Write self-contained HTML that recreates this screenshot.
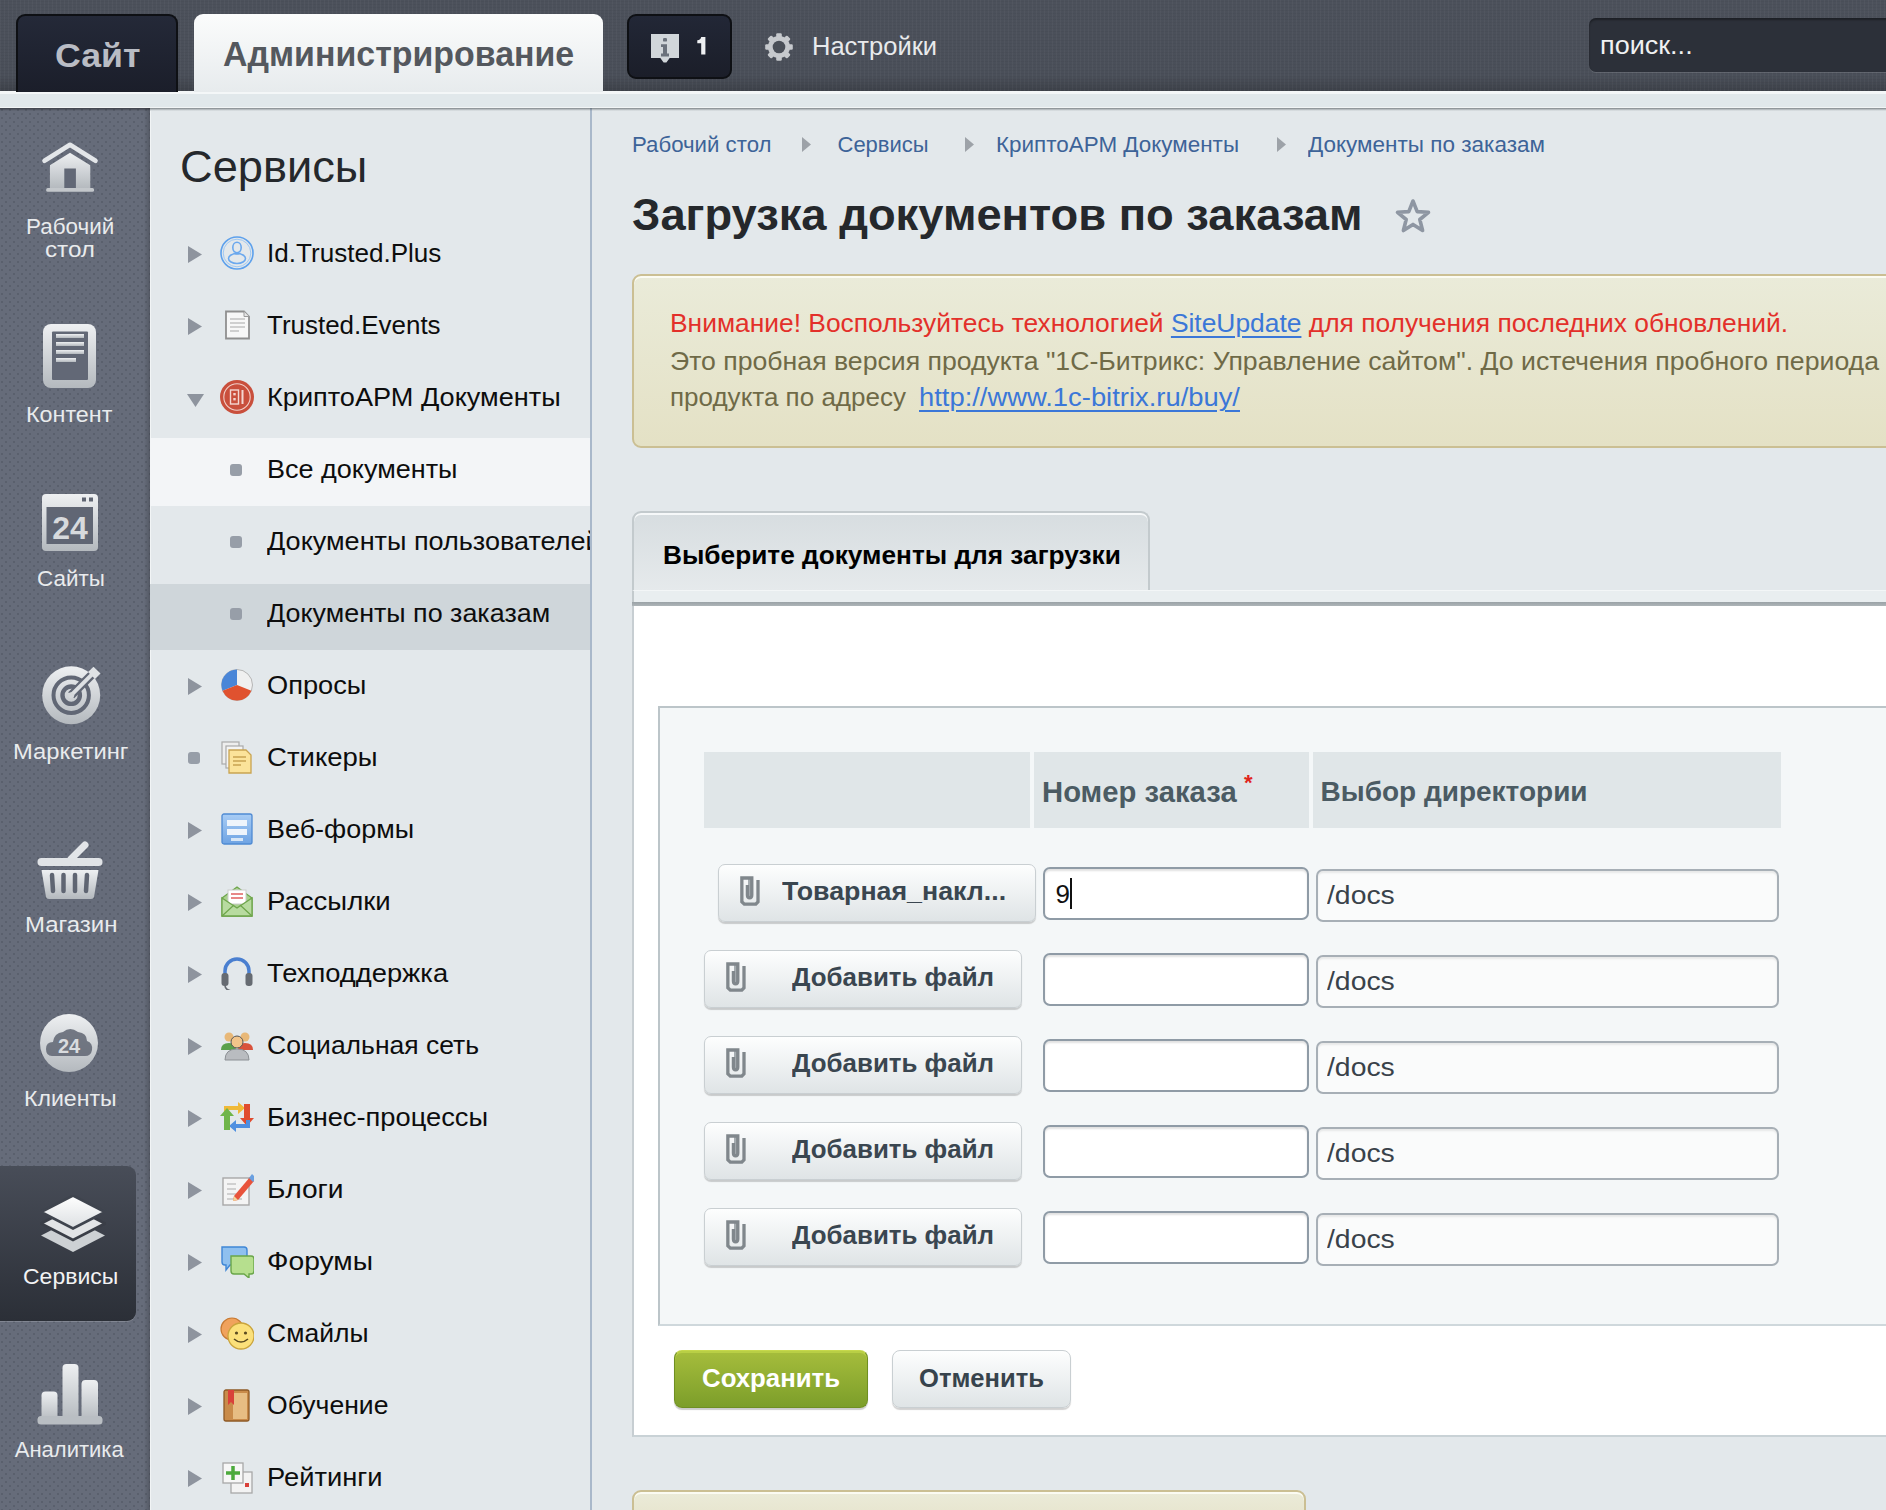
<!DOCTYPE html><html><head><meta charset="utf-8"><style>
html,body{margin:0;padding:0;width:1886px;height:1510px;overflow:hidden;background:#e4e9ec}
.t{position:absolute;white-space:nowrap;line-height:1;font-family:"Liberation Sans",sans-serif}
svg{display:block}
</style></head><body>
<div style="position:absolute;left:0px;top:0px;width:1886px;height:92px;background-image:repeating-linear-gradient(90deg,rgba(255,255,255,.03) 0 1px,transparent 1px 4px),repeating-linear-gradient(0deg,rgba(0,0,0,.035) 0 1px,transparent 1px 3px),linear-gradient(#4c515b,#4a4f59 82%,#3c4048)"></div>
<div style="position:absolute;left:0px;top:91px;width:1886px;height:17px;background:#e1e8eb;border-top:3px solid #f4f7f8;border-bottom:1px solid #f2f5f6;box-sizing:border-box"></div>
<div style="position:absolute;left:0px;top:108px;width:150px;height:1402px;background-color:#666c7a;background-image:radial-gradient(circle at 2px 2px,#5a606d .9px,transparent 1.5px),radial-gradient(circle at 6px 6px,#5a606d .9px,transparent 1.5px);background-size:8px 8px"></div>
<div style="position:absolute;left:144px;top:108px;width:6px;height:1402px;background:linear-gradient(90deg,rgba(0,0,0,0),rgba(0,0,0,.18))"></div>
<div style="position:absolute;left:150px;top:108px;width:440px;height:1402px;background:#e3e8eb"></div>
<div style="position:absolute;left:590px;top:108px;width:2px;height:1402px;background:#a9b8ca"></div>
<div style="position:absolute;left:592px;top:108px;width:1294px;height:1402px;background:#e3e8eb"></div>
<div style="position:absolute;left:150px;top:108px;width:1736px;height:3px;background:linear-gradient(rgba(60,68,72,.6),rgba(60,68,72,.2) 60%,rgba(60,68,72,0))"></div>
<div style="position:absolute;left:150px;top:111px;width:1px;height:1399px;background:#f1f4f5"></div>
<div style="position:absolute;left:0px;top:108px;width:150px;height:3px;background:linear-gradient(rgba(0,0,0,.4),rgba(0,0,0,0))"></div>
<div style="position:absolute;left:16px;top:14px;width:162px;height:78px;background:linear-gradient(#242938,#1b1e2a);border:2px solid #0e1014;border-bottom:none;border-radius:9px 9px 0 0;box-sizing:border-box"></div>
<div class="t " style="left:55px;top:37.71px;font-size:34px;color:#b9bcc4;font-weight:bold;transform:scaleX(1.05);transform-origin:0 0;">Сайт</div>
<div style="position:absolute;left:194px;top:14px;width:409px;height:78px;background:linear-gradient(#fbfcfc,#e7ebed);border-radius:9px 9px 0 0"></div>
<div class="t " style="left:223px;top:36.37px;font-size:35px;color:#54585e;font-weight:bold;transform:scaleX(0.969);transform-origin:0 0;">Администрирование</div>
<div style="position:absolute;left:627px;top:14px;width:105px;height:65px;background:linear-gradient(#222736,#1b1e29);border:2px solid #0e1014;border-radius:9px;box-sizing:border-box"></div>
<svg style="position:absolute;left:650px;top:33px;" width="30" height="31" viewBox="0 0 30 31"><path d="M1 1h28v24h-9.3l-3.3 4.6h-2.8L10.3 25H1z" fill="#d1d6da"/><rect x="13" y="5" width="4" height="3.6" rx="1.2" fill="#6b727c"/><path d="M11 11.3h6v9.3h2v2.8h-8v-2.8h2v-6.5h-2z" fill="#6b727c"/></svg>
<svg style="position:absolute;left:697px;top:37px;" width="9" height="18" viewBox="0 0 9 18"><path d="M4.2 0 H8.4 V17.4 H4.2 V6.2 H0.3 V3.3 Q3.8 3.1 4.2 0z" fill="#eef0f2"/></svg>
<svg style="position:absolute;left:763px;top:31px;" width="32" height="32" viewBox="0 0 32 32"><g fill="#c6c9cd"><circle cx="16" cy="16" r="11"/><rect x="13.2" y="2.2" width="5.6" height="6" rx="1.2" transform="rotate(0 16 16)"/><rect x="13.2" y="2.2" width="5.6" height="6" rx="1.2" transform="rotate(45 16 16)"/><rect x="13.2" y="2.2" width="5.6" height="6" rx="1.2" transform="rotate(90 16 16)"/><rect x="13.2" y="2.2" width="5.6" height="6" rx="1.2" transform="rotate(135 16 16)"/><rect x="13.2" y="2.2" width="5.6" height="6" rx="1.2" transform="rotate(180 16 16)"/><rect x="13.2" y="2.2" width="5.6" height="6" rx="1.2" transform="rotate(225 16 16)"/><rect x="13.2" y="2.2" width="5.6" height="6" rx="1.2" transform="rotate(270 16 16)"/><rect x="13.2" y="2.2" width="5.6" height="6" rx="1.2" transform="rotate(315 16 16)"/></g><circle cx="16" cy="16" r="6.3" fill="#4a4f58"/></svg>
<div class="t " style="left:812px;top:34.33px;font-size:25px;color:#e8eaec;font-weight:normal;transform:scaleX(1.02);transform-origin:0 0;">Настройки</div>
<div style="position:absolute;left:1589px;top:18px;width:310px;height:54px;background:#2c3039;border-radius:7px;box-shadow:inset 0 2px 2px rgba(0,0,0,.35),0 1px 0 rgba(255,255,255,.12)"></div>
<div class="t " style="left:1600px;top:33.41px;font-size:25.5px;color:#f0f1f2;font-weight:normal;transform:scaleX(1.06);transform-origin:0 0;">поиск...</div>
<svg style="position:absolute;left:41px;top:141px;" width="58" height="52" viewBox="0 0 58 52"><defs><linearGradient id="ig" x1="0" y1="0" x2="0" y2="1"><stop offset="0" stop-color="#eef0f2"/><stop offset="1" stop-color="#b4b9be"/></linearGradient></defs><path d="M3.5 19.8 L29 3.8 L54.5 19.8" fill="none" stroke="#e3e6e9" stroke-width="4.6" stroke-linecap="round" stroke-linejoin="round"/><path d="M8.9 24.2 L29 11.7 L49.3 24.2 V47.5 H8.9z" fill="url(#ig)"/><rect x="23.3" y="27.5" width="11.6" height="20" fill="#626876"/><rect x="5.2" y="47" width="47.8" height="3.8" rx="1.5" fill="#c3c7cb"/></svg>
<div class="t " style="left:25.5px;top:216.37px;font-size:22px;color:#e9ebed;font-weight:normal;transform:scaleX(1.02);transform-origin:0 0;">Рабочий</div>
<div class="t " style="left:44.5px;top:239.37px;font-size:22px;color:#e9ebed;font-weight:normal;transform:scaleX(1.1);transform-origin:0 0;">стол</div>
<svg style="position:absolute;left:43px;top:324px;" width="53" height="64" viewBox="0 0 53 64"><defs><linearGradient id="ig" x1="0" y1="0" x2="0" y2="1"><stop offset="0" stop-color="#eef0f2"/><stop offset="1" stop-color="#b4b9be"/></linearGradient></defs><rect x="0" y="0" width="53" height="64" rx="8" fill="url(#ig)"/><rect x="9" y="7.5" width="36" height="48.5" rx="1" fill="#626876"/><rect x="11" y="9.5" width="32" height="44.5" fill="url(#ig)" opacity=".0"/><g fill="url(#ig)"><rect x="13" y="10" width="28" height="4"/><rect x="13" y="18" width="28" height="4"/><rect x="13" y="26" width="28" height="4"/><rect x="13" y="34" width="20" height="4"/></g></svg>
<div class="t " style="left:26px;top:404.37px;font-size:22px;color:#e9ebed;font-weight:normal;transform:scaleX(1.06);transform-origin:0 0;">Контент</div>
<svg style="position:absolute;left:42px;top:494px;" width="56" height="57" viewBox="0 0 56 57"><defs><linearGradient id="ig" x1="0" y1="0" x2="0" y2="1"><stop offset="0" stop-color="#eef0f2"/><stop offset="1" stop-color="#b4b9be"/></linearGradient></defs><rect x="0" y="0" width="56" height="57" rx="4" fill="url(#ig)"/><rect x="4.5" y="13" width="46.5" height="37" fill="#606674"/><rect x="40" y="3.5" width="4" height="4" fill="#5f6572"/><rect x="47" y="3.5" width="4" height="4" fill="#5f6572"/><text x="28" y="45" text-anchor="middle" font-family="Liberation Sans" font-weight="bold" font-size="32" fill="#d7dadd">24</text></svg>
<div class="t " style="left:36.5px;top:568.37px;font-size:22px;color:#e9ebed;font-weight:normal;transform:scaleX(1.02);transform-origin:0 0;">Сайты</div>
<svg style="position:absolute;left:41px;top:666px;" width="62" height="60" viewBox="0 0 62 60"><defs><linearGradient id="ig" x1="0" y1="0" x2="0" y2="1"><stop offset="0" stop-color="#eef0f2"/><stop offset="1" stop-color="#b4b9be"/></linearGradient></defs><circle cx="30.2" cy="29.2" r="29" fill="url(#ig)"/><circle cx="30.2" cy="29.2" r="17.7" fill="none" stroke="#616775" stroke-width="4"/><circle cx="30.2" cy="29.2" r="8.7" fill="none" stroke="#616775" stroke-width="4.4"/><path d="M30.2 29.2 L54 5.4" stroke="#616775" stroke-width="8.5"/><path d="M30.2 29.2 L54 5.4" stroke="#dde0e3" stroke-width="4"/><path d="M47 6 L52.5 0.8 L59.5 7.5 L54 13z" fill="#dfe2e5"/><circle cx="30.2" cy="29.2" r="3" fill="#d5d8db"/></svg>
<div class="t " style="left:12.8px;top:740.87px;font-size:22px;color:#e9ebed;font-weight:normal;transform:scaleX(1.08);transform-origin:0 0;">Маркетинг</div>
<svg style="position:absolute;left:37px;top:841px;" width="66" height="59" viewBox="0 0 66 59"><defs><linearGradient id="ig" x1="0" y1="0" x2="0" y2="1"><stop offset="0" stop-color="#eef0f2"/><stop offset="1" stop-color="#b4b9be"/></linearGradient></defs><path d="M34 18 L48 4" stroke="#e2e5e8" stroke-width="7" stroke-linecap="round"/><rect x="0.5" y="17" width="65" height="8" rx="4" fill="#e0e3e6"/><path d="M4.5 29 H61.5 L57 56 Q56.5 58 54 58 H12 Q9.5 58 9 56z" fill="url(#ig)"/><g stroke="#5f6572" stroke-width="4.5" stroke-linecap="round"><path d="M15 34 L16 50"/><path d="M26.5 34 V50"/><path d="M38 34 V50"/><path d="M50 34 L49 50"/></g></svg>
<div class="t " style="left:24.5px;top:914.37px;font-size:22px;color:#e9ebed;font-weight:normal;transform:scaleX(1.09);transform-origin:0 0;">Магазин</div>
<svg style="position:absolute;left:40px;top:1014px;" width="58" height="58" viewBox="0 0 58 58"><defs><linearGradient id="ig" x1="0" y1="0" x2="0" y2="1"><stop offset="0" stop-color="#eef0f2"/><stop offset="1" stop-color="#b4b9be"/></linearGradient></defs><circle cx="29" cy="29" r="29" fill="url(#ig)"/><path d="M12 42 Q6 42 6 35 Q6 28 13 28 Q14 19 23 18 Q30 12 38 18 Q47 19 47 27 Q53 29 52 36 Q51 42 45 42z" fill="#5f6572" opacity=".85"/><text x="29" y="39" text-anchor="middle" font-family="Liberation Sans" font-weight="bold" font-size="20" fill="#d9dcdf">24</text></svg>
<div class="t " style="left:24px;top:1087.87px;font-size:22px;color:#e9ebed;font-weight:normal;transform:scaleX(1.05);transform-origin:0 0;">Клиенты</div>
<div style="position:absolute;left:0px;top:1166px;width:136px;height:155px;background:linear-gradient(#484d58,#2b2f37);border-radius:0 9px 9px 0;box-shadow:0 1px 0 rgba(255,255,255,.18)"></div>
<svg style="position:absolute;left:40px;top:1195px;" width="66" height="60" viewBox="0 0 66 60"><defs><linearGradient id="lg" x1="0" y1="0" x2="0" y2="1"><stop offset="0" stop-color="#ffffff"/><stop offset="1" stop-color="#dcdfe2"/></linearGradient></defs><path d="M1 40.5 L33 24 L65 40.5 L33 57z" fill="#cdd1d4"/><path d="M1 28.5 L33 12 L65 28.5 L33 45z" fill="#e2e4e6" stroke="#3a3e47" stroke-width="2.6"/><path d="M1 17 L33 0.5 L65 17 L33 33.5z" fill="url(#lg)" stroke="#3f444e" stroke-width="2.6"/></svg>
<div class="t " style="left:23px;top:1266.37px;font-size:22px;color:#f2f3f4;font-weight:normal;transform:scaleX(1.046);transform-origin:0 0;">Сервисы</div>
<svg style="position:absolute;left:37px;top:1364px;" width="66" height="61" viewBox="0 0 66 61"><defs><linearGradient id="ig" x1="0" y1="0" x2="0" y2="1"><stop offset="0" stop-color="#eef0f2"/><stop offset="1" stop-color="#b4b9be"/></linearGradient></defs><rect x="4.5" y="27.5" width="16" height="30" rx="4" fill="url(#ig)"/><rect x="25.5" y="0" width="16" height="57" rx="4" fill="url(#ig)"/><rect x="44.5" y="16" width="16.5" height="41" rx="4" fill="url(#ig)"/><rect x="0.5" y="52" width="65" height="8.5" rx="3.5" fill="#b9bec3"/></svg>
<div class="t " style="left:14.8px;top:1439.37px;font-size:22px;color:#e9ebed;font-weight:normal;">Аналитика</div>
<div class="t " style="left:180px;top:145.25px;font-size:44px;color:#25282c;font-weight:normal;transform:scaleX(1.027);transform-origin:0 0;">Сервисы</div>
<div style="position:absolute;left:150px;top:438px;width:440px;height:68px;background:#f3f5f7"></div>
<div style="position:absolute;left:150px;top:584px;width:440px;height:66px;background:#cfd6da"></div>
<svg style="position:absolute;left:188px;top:246px;" width="14" height="17" viewBox="0 0 14 17"><path d="M0 0 L14 8.5 L0 17z" fill="#8e949e"/></svg>
<svg style="position:absolute;left:220px;top:236px;" width="34" height="34" viewBox="0 0 34 34"><circle cx="17" cy="17" r="16" fill="none" stroke="#5ea1ec" stroke-width="1.6"/><circle cx="17" cy="17" r="13.8" fill="none" stroke="#9fc8f3" stroke-width="1"/><ellipse cx="17" cy="11.5" rx="4.2" ry="5.2" fill="none" stroke="#6aa8ee" stroke-width="1.6"/><ellipse cx="17" cy="22.5" rx="8.5" ry="5" fill="none" stroke="#6aa8ee" stroke-width="1.6"/><path d="M13.5 17 Q17 19.5 20.5 17" fill="none" stroke="#6aa8ee" stroke-width="1.2"/></svg>
<div class="t " style="left:266.5px;top:239.99px;font-size:26px;color:#0d0d0d;font-weight:normal;transform:scaleX(1.0029);transform-origin:0 0;">Id.Trusted.Plus</div>
<svg style="position:absolute;left:188px;top:318px;" width="14" height="17" viewBox="0 0 14 17"><path d="M0 0 L14 8.5 L0 17z" fill="#8e949e"/></svg>
<svg style="position:absolute;left:220px;top:308px;" width="34" height="34" viewBox="0 0 34 34"><path d="M6 3.5 H24 L29 8.5 V30.5 H6z" fill="#f7f7f7" stroke="#8f8f8f" stroke-width="1.8"/><path d="M24 3.5 V8.5 H29" fill="#e6e6e6" stroke="#9a9a9a" stroke-width="1"/><g stroke="#c2c2c2" stroke-width="1.6"><path d="M10 11 H25M10 15 H25M10 19 H25M10 23 H19"/></g></svg>
<div class="t " style="left:266.5px;top:311.99px;font-size:26px;color:#0d0d0d;font-weight:normal;transform:scaleX(0.9983);transform-origin:0 0;">Trusted.Events</div>
<svg style="position:absolute;left:187px;top:394px;" width="17" height="13" viewBox="0 0 17 13"><path d="M0 0 L17 0 L8.5 13z" fill="#8e949e"/></svg>
<svg style="position:absolute;left:220px;top:380px;" width="34" height="34" viewBox="0 0 34 34"><circle cx="17" cy="17" r="17" fill="#c94f3c"/><circle cx="17" cy="17" r="13.2" fill="none" stroke="#f2cfc8" stroke-width="1.1"/><rect x="10.5" y="10" width="8" height="14" fill="none" stroke="#f4d8d2" stroke-width="1.4"/><rect x="13.3" y="13" width="2.4" height="2.4" fill="#f4d8d2"/><rect x="13.3" y="18" width="2.4" height="2.4" fill="#f4d8d2"/><rect x="21.5" y="10" width="2" height="14" fill="#f4d8d2"/></svg>
<div class="t " style="left:266.5px;top:383.99px;font-size:26px;color:#0d0d0d;font-weight:normal;transform:scaleX(1.0431);transform-origin:0 0;">КриптоАРМ Документы</div>
<svg style="position:absolute;left:230px;top:464px;" width="12" height="12" viewBox="0 0 12 12"><rect x="0" y="0" width="12" height="12" rx="3" fill="#979ea8"/></svg>
<div class="t " style="left:266.5px;top:455.99px;font-size:26px;color:#0d0d0d;font-weight:normal;transform:scaleX(1.0388);transform-origin:0 0;">Все документы</div>
<svg style="position:absolute;left:230px;top:536px;" width="12" height="12" viewBox="0 0 12 12"><rect x="0" y="0" width="12" height="12" rx="3" fill="#979ea8"/></svg>
<div style="position:absolute;left:150px;top:520px;width:440px;height:42px;overflow:hidden"><div class="t" style="left:116.5px;top:7.99px;font-size:26px;color:#0d0d0d;transform:scaleX(1.04);transform-origin:0 0">Документы пользователей</div></div>
<svg style="position:absolute;left:230px;top:608px;" width="12" height="12" viewBox="0 0 12 12"><rect x="0" y="0" width="12" height="12" rx="3" fill="#979ea8"/></svg>
<div class="t " style="left:266.5px;top:599.99px;font-size:26px;color:#0d0d0d;font-weight:normal;transform:scaleX(1.0343);transform-origin:0 0;">Документы по заказам</div>
<svg style="position:absolute;left:188px;top:678px;" width="14" height="17" viewBox="0 0 14 17"><path d="M0 0 L14 8.5 L0 17z" fill="#8e949e"/></svg>
<svg style="position:absolute;left:220px;top:668px;" width="34" height="34" viewBox="0 0 34 34"><circle cx="17" cy="17" r="15.5" fill="#f0f0f0" stroke="#b5b5b5" stroke-width="1"/><path d="M17 17 V1.5 A15.5 15.5 0 0 0 2.6 22.8z" fill="#4a86d8"/><path d="M17 17 L2.6 22.8 A15.5 15.5 0 0 0 31.4 22.8z" fill="#e0522f"/></svg>
<div class="t " style="left:266.5px;top:671.99px;font-size:26px;color:#0d0d0d;font-weight:normal;transform:scaleX(1.0473);transform-origin:0 0;">Опросы</div>
<svg style="position:absolute;left:188px;top:752px;" width="12" height="12" viewBox="0 0 12 12"><rect x="0" y="0" width="12" height="12" rx="3" fill="#979ea8"/></svg>
<svg style="position:absolute;left:220px;top:740px;" width="34" height="34" viewBox="0 0 34 34"><rect x="2" y="2" width="17" height="22" fill="#eee" stroke="#aaa" stroke-width="1.2"/><rect x="6" y="6" width="17" height="22" fill="#f4f4f4" stroke="#aaa" stroke-width="1.2"/><path d="M9 10 H26 L31 15 V33 H9z" fill="#fbe39a" stroke="#c9a451" stroke-width="1.3"/><g stroke="#c9a451" stroke-width="1.3"><path d="M13 17 H26M13 21 H26M13 25 H21"/></g></svg>
<div class="t " style="left:266.5px;top:743.99px;font-size:26px;color:#0d0d0d;font-weight:normal;transform:scaleX(1.059);transform-origin:0 0;">Стикеры</div>
<svg style="position:absolute;left:188px;top:822px;" width="14" height="17" viewBox="0 0 14 17"><path d="M0 0 L14 8.5 L0 17z" fill="#8e949e"/></svg>
<svg style="position:absolute;left:220px;top:812px;" width="34" height="34" viewBox="0 0 34 34"><defs><linearGradient id="fg" x1="0" y1="0" x2="0" y2="1"><stop offset="0" stop-color="#a9cdf5"/><stop offset="1" stop-color="#6ea3e3"/></linearGradient></defs><rect x="2" y="2" width="30" height="30" rx="2" fill="url(#fg)" stroke="#4f8ad3" stroke-width="1.3"/><rect x="7" y="8" width="20" height="6" fill="#eef4fb"/><rect x="7" y="17" width="20" height="6" fill="#eef4fb"/><rect x="11" y="26" width="12" height="3" fill="#d7e6f6"/></svg>
<div class="t " style="left:266.5px;top:815.99px;font-size:26px;color:#0d0d0d;font-weight:normal;transform:scaleX(1.0365);transform-origin:0 0;">Веб-формы</div>
<svg style="position:absolute;left:188px;top:894px;" width="14" height="17" viewBox="0 0 14 17"><path d="M0 0 L14 8.5 L0 17z" fill="#8e949e"/></svg>
<svg style="position:absolute;left:220px;top:884px;" width="34" height="34" viewBox="0 0 34 34"><path d="M2 14 L17 3 L32 14 V32 H2z" fill="#a9d18e" stroke="#6ea54b" stroke-width="1.3"/><rect x="8" y="6" width="18" height="14" fill="#fff" stroke="#ccc" stroke-width="1"/><path d="M11 10 H23 M11 14 H23" stroke="#e06060" stroke-width="1.6"/><path d="M2 14 L17 24 L32 14 V32 H2z" fill="#b8dba0" stroke="#6ea54b" stroke-width="1.3"/><path d="M2 32 L14 21 M32 32 L20 21" stroke="#6ea54b" stroke-width="1.2"/></svg>
<div class="t " style="left:266.5px;top:887.99px;font-size:26px;color:#0d0d0d;font-weight:normal;transform:scaleX(1.0595);transform-origin:0 0;">Рассылки</div>
<svg style="position:absolute;left:188px;top:966px;" width="14" height="17" viewBox="0 0 14 17"><path d="M0 0 L14 8.5 L0 17z" fill="#8e949e"/></svg>
<svg style="position:absolute;left:220px;top:956px;" width="34" height="34" viewBox="0 0 34 34"><path d="M5 20 V15 A12 12 0 0 1 29 15 V20" fill="none" stroke="#4a7fd0" stroke-width="3.5"/><rect x="1.5" y="17" width="7" height="13" rx="3" fill="#666b72"/><rect x="25.5" y="17" width="7" height="13" rx="3" fill="#666b72"/><path d="M5 30 Q6 35 13 35" fill="none" stroke="#666b72" stroke-width="1.6"/></svg>
<div class="t " style="left:266.5px;top:959.99px;font-size:26px;color:#0d0d0d;font-weight:normal;transform:scaleX(1.0509);transform-origin:0 0;">Техподдержка</div>
<svg style="position:absolute;left:188px;top:1038px;" width="14" height="17" viewBox="0 0 14 17"><path d="M0 0 L14 8.5 L0 17z" fill="#8e949e"/></svg>
<svg style="position:absolute;left:220px;top:1028px;" width="34" height="34" viewBox="0 0 34 34"><circle cx="9" cy="9" r="4.5" fill="#e8b878"/><circle cx="25" cy="9" r="4.5" fill="#e8b878"/><path d="M1 22 Q1 15 9 15 Q16 15 16 22z" fill="#5aa04a"/><path d="M18 22 Q18 15 25 15 Q33 15 33 22z" fill="#d9523b"/><circle cx="17" cy="14" r="6" fill="#f2c48a" stroke="#555" stroke-width="1"/><path d="M5 32 Q5 21 17 21 Q29 21 29 32z" fill="#b9bcc0" stroke="#8c9095" stroke-width="1"/></svg>
<div class="t " style="left:266.5px;top:1031.99px;font-size:26px;color:#0d0d0d;font-weight:normal;transform:scaleX(1.0196);transform-origin:0 0;">Социальная сеть</div>
<svg style="position:absolute;left:188px;top:1110px;" width="14" height="17" viewBox="0 0 14 17"><path d="M0 0 L14 8.5 L0 17z" fill="#8e949e"/></svg>
<svg style="position:absolute;left:220px;top:1100px;" width="34" height="34" viewBox="0 0 34 34"><path d="M4 6 H18 V2 L25 8 L18 14 V10 H8 V16 H4z" fill="#f0b938"/><path d="M24 4 H30 V18 H34 L27 26 L20 18 H24z" fill="#e04b2e"/><path d="M30 28 H16 V32 L9 26 L16 20 V24 H26 V20 H30z" fill="#4e8fe0"/><path d="M10 30 H4 V16 H0 L7 8 L14 16 H10z" fill="#6fb54a"/></svg>
<div class="t " style="left:266.5px;top:1103.99px;font-size:26px;color:#0d0d0d;font-weight:normal;transform:scaleX(1.0488);transform-origin:0 0;">Бизнес-процессы</div>
<svg style="position:absolute;left:188px;top:1182px;" width="14" height="17" viewBox="0 0 14 17"><path d="M0 0 L14 8.5 L0 17z" fill="#8e949e"/></svg>
<svg style="position:absolute;left:220px;top:1172px;" width="34" height="34" viewBox="0 0 34 34"><rect x="3" y="6" width="26" height="27" fill="#f4f4f4" stroke="#a8a8a8" stroke-width="1.4"/><g stroke="#c4c4c4" stroke-width="1.4"><path d="M7 12 H16M7 17 H16M7 22 H16M7 27 H22"/></g><path d="M14 24 L30 5 L34 9 L18 28 L13 29z" fill="#e8533b"/><path d="M29 6 L32 2 L36 6 L33 10z" fill="#6aa0e0"/><path d="M14 24 L18 28 L13 29z" fill="#f2d49a"/></svg>
<div class="t " style="left:266.5px;top:1175.99px;font-size:26px;color:#0d0d0d;font-weight:normal;transform:scaleX(1.0831);transform-origin:0 0;">Блоги</div>
<svg style="position:absolute;left:188px;top:1254px;" width="14" height="17" viewBox="0 0 14 17"><path d="M0 0 L14 8.5 L0 17z" fill="#8e949e"/></svg>
<svg style="position:absolute;left:220px;top:1244px;" width="34" height="34" viewBox="0 0 34 34"><path d="M2 3 H24 Q27 3 27 6 V18 Q27 21 24 21 H10 L6 26 V21 H5 Q2 21 2 18z" fill="#8fc0ef" stroke="#3f86d6" stroke-width="1.4"/><path d="M11 12 H31 Q34 12 34 15 V27 Q34 30 31 30 H29 V34 L24 30 H14 Q11 30 11 27z" fill="#b6df8e" stroke="#6aa64a" stroke-width="1.4"/></svg>
<div class="t " style="left:266.5px;top:1247.99px;font-size:26px;color:#0d0d0d;font-weight:normal;transform:scaleX(1.086);transform-origin:0 0;">Форумы</div>
<svg style="position:absolute;left:188px;top:1326px;" width="14" height="17" viewBox="0 0 14 17"><path d="M0 0 L14 8.5 L0 17z" fill="#8e949e"/></svg>
<svg style="position:absolute;left:220px;top:1316px;" width="34" height="34" viewBox="0 0 34 34"><circle cx="12" cy="13" r="11" fill="#f0a25c" stroke="#c77a33" stroke-width="1.2"/><circle cx="21" cy="20" r="13" fill="#fbe07a" stroke="#caa43c" stroke-width="1.3"/><circle cx="16.5" cy="17" r="1.6" fill="#5a4a20"/><circle cx="25.5" cy="17" r="1.6" fill="#5a4a20"/><path d="M14 23 Q21 29 28 23" fill="none" stroke="#5a4a20" stroke-width="1.6"/></svg>
<div class="t " style="left:266.5px;top:1319.99px;font-size:26px;color:#0d0d0d;font-weight:normal;transform:scaleX(1.02);transform-origin:0 0;">Смайлы</div>
<svg style="position:absolute;left:188px;top:1398px;" width="14" height="17" viewBox="0 0 14 17"><path d="M0 0 L14 8.5 L0 17z" fill="#8e949e"/></svg>
<svg style="position:absolute;left:220px;top:1388px;" width="34" height="34" viewBox="0 0 34 34"><rect x="4" y="2" width="25" height="31" rx="2" fill="#c98b4a" stroke="#8e5a26" stroke-width="1.3"/><rect x="13" y="5" width="14" height="26" fill="#e7bd83"/><path d="M8 2 V17 L11 14 L14 17 V2z" fill="#d9413a"/></svg>
<div class="t " style="left:266.5px;top:1391.99px;font-size:26px;color:#0d0d0d;font-weight:normal;transform:scaleX(1.0217);transform-origin:0 0;">Обучение</div>
<svg style="position:absolute;left:188px;top:1470px;" width="14" height="17" viewBox="0 0 14 17"><path d="M0 0 L14 8.5 L0 17z" fill="#8e949e"/></svg>
<svg style="position:absolute;left:220px;top:1460px;" width="34" height="34" viewBox="0 0 34 34"><rect x="11" y="12" width="21" height="21" fill="#f3f3f3" stroke="#a8a8a8" stroke-width="1.3"/><rect x="3" y="3" width="20" height="20" fill="#f7f7f7" stroke="#a8a8a8" stroke-width="1.3"/><path d="M13 6 V20 M6 13 H20" stroke="#4caa3c" stroke-width="3.5"/><rect x="25" y="23" width="4" height="4" fill="#d9413a"/></svg>
<div class="t " style="left:266.5px;top:1463.99px;font-size:26px;color:#0d0d0d;font-weight:normal;transform:scaleX(1.0495);transform-origin:0 0;">Рейтинги</div>
<div style="position:absolute;left:588px;top:438px;width:2px;height:212px;background:transparent"></div>
<div class="t " style="left:631.5px;top:134.37px;font-size:22px;color:#3d6398;font-weight:normal;transform:scaleX(1.01);transform-origin:0 0;">Рабочий стол</div>
<svg style="position:absolute;left:802px;top:137px;" width="9" height="15" viewBox="0 0 9 15"><path d="M0 0 L9 7.5 L0 15z" fill="#9da2a8"/></svg>
<div class="t " style="left:837.5px;top:134.37px;font-size:22px;color:#3d6398;font-weight:normal;">Сервисы</div>
<svg style="position:absolute;left:965px;top:137px;" width="9" height="15" viewBox="0 0 9 15"><path d="M0 0 L9 7.5 L0 15z" fill="#9da2a8"/></svg>
<div class="t " style="left:995.5px;top:134.37px;font-size:22px;color:#3d6398;font-weight:normal;transform:scaleX(1.02);transform-origin:0 0;">КриптоАРМ Документы</div>
<svg style="position:absolute;left:1277px;top:137px;" width="9" height="15" viewBox="0 0 9 15"><path d="M0 0 L9 7.5 L0 15z" fill="#9da2a8"/></svg>
<div class="t " style="left:1307.5px;top:134.37px;font-size:22px;color:#3d6398;font-weight:normal;transform:scaleX(1.0228744065602071);transform-origin:0 0;">Документы по заказам</div>
<div class="t " style="left:632px;top:192.40px;font-size:45px;color:#25282c;font-weight:bold;transform:scaleX(1.007);transform-origin:0 0;">Загрузка документов по заказам</div>
<svg style="position:absolute;left:1394px;top:198px;" width="38" height="36" viewBox="0 0 38 36"><path d="M19 3 L23.2 13.6 L34.5 14.3 L25.8 21.5 L28.6 32.5 L19 26.4 L9.4 32.5 L12.2 21.5 L3.5 14.3 L14.8 13.6z" fill="none" stroke="#8e96a2" stroke-width="3.6" stroke-linejoin="round"/></svg>
<div style="position:absolute;left:632px;top:274px;width:1300px;height:174px;background:linear-gradient(#eaebd9,#e4e1c5);border:2px solid #cbbf93;border-radius:9px;box-sizing:border-box;box-shadow:inset 0 2px 0 #fbfbf2"></div>
<div class="t " style="left:669.5px;top:309.99px;font-size:26px;color:#e3302a;font-weight:normal;transform:scaleX(1.0145);transform-origin:0 0;">Внимание! Воспользуйтесь технологией <u style="color:#3b77d8;text-decoration-thickness:2px;text-underline-offset:4px">SiteUpdate</u> для получения последних обновлений.</div>
<div class="t " style="left:669.5px;top:348.49px;font-size:26px;color:#6f6a47;font-weight:normal;transform:scaleX(1.0247499576199357);transform-origin:0 0;">Это пробная версия продукта "1С-Битрикс: Управление сайтом". До истечения пробного периода</div>
<div class="t " style="left:669.5px;top:384.49px;font-size:26px;color:#6f6a47;font-weight:normal;transform:scaleX(1.0004239084357778);transform-origin:0 0;">продукта по адресу</div>
<div class="t " style="left:918.5px;top:384.49px;font-size:26px;color:#3b77d8;font-weight:normal;transform:scaleX(1.052804198097737);transform-origin:0 0;"><u style="text-decoration-thickness:2px;text-underline-offset:4px">http://www.1c-bitrix.ru/buy/</u></div>
<div style="position:absolute;left:632px;top:511px;width:518px;height:82px;background:linear-gradient(#d7dde0,#e6eaec);border:2px solid #c3cacd;border-bottom:none;border-radius:9px 9px 0 0;box-sizing:border-box;box-shadow:inset 0 2px 0 #f6f8f9"></div>
<div class="t " style="left:662.5px;top:542.49px;font-size:26px;color:#000;font-weight:bold;transform:scaleX(1.009);transform-origin:0 0;">Выберите документы для загрузки</div>
<div style="position:absolute;left:632px;top:590px;width:1254px;height:12px;background:#e9eef0;border-top:1px solid #f3f6f7;border-left:2px solid #c3cacd;box-sizing:border-box"></div>
<div style="position:absolute;left:632px;top:602px;width:1254px;height:4px;background:linear-gradient(#9aa2a6,#aeb5b8)"></div>
<div style="position:absolute;left:632px;top:606px;width:1254px;height:831px;background:#fff;border-left:2px solid #c7ced2;border-bottom:2px solid #c9d2d6;box-sizing:border-box"></div>
<div style="position:absolute;left:658px;top:706px;width:1228px;height:620px;background:#f4f7f8;border:2px solid #bcc5c9;border-right:none;box-sizing:border-box;border-bottom-color:#cfd8dc"></div>
<div style="position:absolute;left:704px;top:752px;width:326px;height:76px;background:#e0e6e8"></div>
<div style="position:absolute;left:1034px;top:752px;width:275px;height:76px;background:#e0e6e8"></div>
<div style="position:absolute;left:1313px;top:752px;width:468px;height:76px;background:#e0e6e8"></div>
<div class="t " style="left:1041.5px;top:778.45px;font-size:29px;color:#4b5b63;font-weight:bold;transform:scaleX(1.009);transform-origin:0 0;">Номер заказа</div>
<div class="t " style="left:1244px;top:772.37px;font-size:22px;color:#e0241c;font-weight:bold;">*</div>
<div class="t " style="left:1320.5px;top:777.79px;font-size:28px;color:#4b5b63;font-weight:bold;">Выбор директории</div>
<div style="position:absolute;left:718px;top:864px;width:318px;height:58px;background:linear-gradient(#fdfefe,#dfe4e6);border:1.5px solid #c9cfd2;border-radius:7px;box-sizing:border-box;box-shadow:0 2px 1px rgba(0,0,0,.18)"></div>
<svg style="position:absolute;left:740px;top:875px;" width="22" height="32" viewBox="0 0 22 32"><rect x="8" y="4" width="3" height="18" fill="#a4abaf"/><path d="M7.4 10 V20 Q7.4 22.8 9.6 22.8 Q11.8 22.8 11.8 20 V3 H1.85 V26.8 L4.3 29.2 H15.8 L18 26.8 V5" fill="none" stroke="#80878c" stroke-width="3.3"/></svg>
<div class="t " style="left:782px;top:878.49px;font-size:26px;color:#3a4650;font-weight:bold;transform:scaleX(1.03);transform-origin:0 0;">Товарная_накл...</div>
<div style="position:absolute;left:1043px;top:866.5px;width:266px;height:53px;background:#fff;border:2px solid #8f9ba6;border-radius:7px;box-sizing:border-box;box-shadow:inset 0 2px 2px rgba(0,0,0,.12)"></div>
<div style="position:absolute;left:1316px;top:868.5px;width:463px;height:53px;background:#fafbfb;border:2px solid #a7afb6;border-radius:7px;box-sizing:border-box;box-shadow:inset 0 2px 2px rgba(0,0,0,.08)"></div>
<div class="t " style="left:1327px;top:881.79px;font-size:26px;color:#39424a;font-weight:normal;transform:scaleX(1.09);transform-origin:0 0;">/docs</div>
<div style="position:absolute;left:704px;top:950px;width:318px;height:58px;background:linear-gradient(#fdfefe,#dfe4e6);border:1.5px solid #c9cfd2;border-radius:7px;box-sizing:border-box;box-shadow:0 2px 1px rgba(0,0,0,.18)"></div>
<svg style="position:absolute;left:726px;top:961px;" width="22" height="32" viewBox="0 0 22 32"><rect x="8" y="4" width="3" height="18" fill="#a4abaf"/><path d="M7.4 10 V20 Q7.4 22.8 9.6 22.8 Q11.8 22.8 11.8 20 V3 H1.85 V26.8 L4.3 29.2 H15.8 L18 26.8 V5" fill="none" stroke="#80878c" stroke-width="3.3"/></svg>
<div class="t " style="left:792px;top:964.49px;font-size:26px;color:#3a4650;font-weight:bold;transform:scaleX(0.996);transform-origin:0 0;">Добавить файл</div>
<div style="position:absolute;left:1043px;top:952.5px;width:266px;height:53px;background:#fff;border:2px solid #8f9ba6;border-radius:7px;box-sizing:border-box;box-shadow:inset 0 2px 2px rgba(0,0,0,.12)"></div>
<div style="position:absolute;left:1316px;top:954.5px;width:463px;height:53px;background:#fafbfb;border:2px solid #a7afb6;border-radius:7px;box-sizing:border-box;box-shadow:inset 0 2px 2px rgba(0,0,0,.08)"></div>
<div class="t " style="left:1327px;top:967.79px;font-size:26px;color:#39424a;font-weight:normal;transform:scaleX(1.09);transform-origin:0 0;">/docs</div>
<div style="position:absolute;left:704px;top:1036px;width:318px;height:58px;background:linear-gradient(#fdfefe,#dfe4e6);border:1.5px solid #c9cfd2;border-radius:7px;box-sizing:border-box;box-shadow:0 2px 1px rgba(0,0,0,.18)"></div>
<svg style="position:absolute;left:726px;top:1047px;" width="22" height="32" viewBox="0 0 22 32"><rect x="8" y="4" width="3" height="18" fill="#a4abaf"/><path d="M7.4 10 V20 Q7.4 22.8 9.6 22.8 Q11.8 22.8 11.8 20 V3 H1.85 V26.8 L4.3 29.2 H15.8 L18 26.8 V5" fill="none" stroke="#80878c" stroke-width="3.3"/></svg>
<div class="t " style="left:792px;top:1050.49px;font-size:26px;color:#3a4650;font-weight:bold;transform:scaleX(0.996);transform-origin:0 0;">Добавить файл</div>
<div style="position:absolute;left:1043px;top:1038.5px;width:266px;height:53px;background:#fff;border:2px solid #8f9ba6;border-radius:7px;box-sizing:border-box;box-shadow:inset 0 2px 2px rgba(0,0,0,.12)"></div>
<div style="position:absolute;left:1316px;top:1040.5px;width:463px;height:53px;background:#fafbfb;border:2px solid #a7afb6;border-radius:7px;box-sizing:border-box;box-shadow:inset 0 2px 2px rgba(0,0,0,.08)"></div>
<div class="t " style="left:1327px;top:1053.79px;font-size:26px;color:#39424a;font-weight:normal;transform:scaleX(1.09);transform-origin:0 0;">/docs</div>
<div style="position:absolute;left:704px;top:1122px;width:318px;height:58px;background:linear-gradient(#fdfefe,#dfe4e6);border:1.5px solid #c9cfd2;border-radius:7px;box-sizing:border-box;box-shadow:0 2px 1px rgba(0,0,0,.18)"></div>
<svg style="position:absolute;left:726px;top:1133px;" width="22" height="32" viewBox="0 0 22 32"><rect x="8" y="4" width="3" height="18" fill="#a4abaf"/><path d="M7.4 10 V20 Q7.4 22.8 9.6 22.8 Q11.8 22.8 11.8 20 V3 H1.85 V26.8 L4.3 29.2 H15.8 L18 26.8 V5" fill="none" stroke="#80878c" stroke-width="3.3"/></svg>
<div class="t " style="left:792px;top:1136.49px;font-size:26px;color:#3a4650;font-weight:bold;transform:scaleX(0.996);transform-origin:0 0;">Добавить файл</div>
<div style="position:absolute;left:1043px;top:1124.5px;width:266px;height:53px;background:#fff;border:2px solid #8f9ba6;border-radius:7px;box-sizing:border-box;box-shadow:inset 0 2px 2px rgba(0,0,0,.12)"></div>
<div style="position:absolute;left:1316px;top:1126.5px;width:463px;height:53px;background:#fafbfb;border:2px solid #a7afb6;border-radius:7px;box-sizing:border-box;box-shadow:inset 0 2px 2px rgba(0,0,0,.08)"></div>
<div class="t " style="left:1327px;top:1139.79px;font-size:26px;color:#39424a;font-weight:normal;transform:scaleX(1.09);transform-origin:0 0;">/docs</div>
<div style="position:absolute;left:704px;top:1208px;width:318px;height:58px;background:linear-gradient(#fdfefe,#dfe4e6);border:1.5px solid #c9cfd2;border-radius:7px;box-sizing:border-box;box-shadow:0 2px 1px rgba(0,0,0,.18)"></div>
<svg style="position:absolute;left:726px;top:1219px;" width="22" height="32" viewBox="0 0 22 32"><rect x="8" y="4" width="3" height="18" fill="#a4abaf"/><path d="M7.4 10 V20 Q7.4 22.8 9.6 22.8 Q11.8 22.8 11.8 20 V3 H1.85 V26.8 L4.3 29.2 H15.8 L18 26.8 V5" fill="none" stroke="#80878c" stroke-width="3.3"/></svg>
<div class="t " style="left:792px;top:1222.49px;font-size:26px;color:#3a4650;font-weight:bold;transform:scaleX(0.996);transform-origin:0 0;">Добавить файл</div>
<div style="position:absolute;left:1043px;top:1210.5px;width:266px;height:53px;background:#fff;border:2px solid #8f9ba6;border-radius:7px;box-sizing:border-box;box-shadow:inset 0 2px 2px rgba(0,0,0,.12)"></div>
<div style="position:absolute;left:1316px;top:1212.5px;width:463px;height:53px;background:#fafbfb;border:2px solid #a7afb6;border-radius:7px;box-sizing:border-box;box-shadow:inset 0 2px 2px rgba(0,0,0,.08)"></div>
<div class="t " style="left:1327px;top:1225.79px;font-size:26px;color:#39424a;font-weight:normal;transform:scaleX(1.09);transform-origin:0 0;">/docs</div>
<div class="t " style="left:1055.5px;top:880.79px;font-size:26px;color:#111;font-weight:normal;">9</div>
<div style="position:absolute;left:1070px;top:878px;width:2px;height:31px;background:#111"></div>
<div style="position:absolute;left:674px;top:1350px;width:194px;height:58px;background:linear-gradient(#a6bd3c,#7c9e2a);border:1px solid #6f8f22;border-top-color:#c6d84c;border-radius:8px;box-sizing:border-box;box-shadow:0 2px 1px rgba(0,0,0,.2),inset 0 2px 0 #b9cf45"></div>
<div class="t " style="left:702px;top:1364.99px;font-size:26px;color:#fff;font-weight:bold;transform:scaleX(0.992);transform-origin:0 0;">Сохранить</div>
<div style="position:absolute;left:892px;top:1350px;width:179px;height:58px;background:linear-gradient(#fdfefe,#dfe4e6);border:1.5px solid #c9cfd2;border-radius:8px;box-sizing:border-box;box-shadow:0 2px 1px rgba(0,0,0,.18)"></div>
<div class="t " style="left:919px;top:1364.99px;font-size:26px;color:#37434c;font-weight:bold;transform:scaleX(0.983477576711251);transform-origin:0 0;">Отменить</div>
<div style="position:absolute;left:632px;top:1490px;width:674px;height:40px;background:linear-gradient(#ebebd9,#e5e2c8);border:2px solid #cbbf93;border-radius:9px;box-sizing:border-box;box-shadow:inset 0 2px 0 #fbfbf2"></div>
</body></html>
